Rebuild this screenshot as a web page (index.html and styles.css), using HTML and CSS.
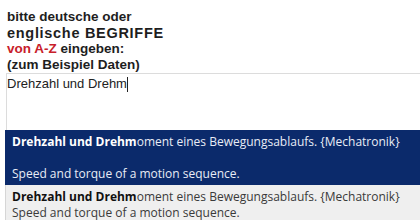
FILE: index.html
```html
<!DOCTYPE html>
<html lang="de">
<head>
<meta charset="utf-8">
<link rel="stylesheet" href="styles.css">
</head>
<body>
<div class="prompt">
  <div>bitte deutsche oder</div>
  <div class="wide">englische BEGRIFFE</div>
  <div><span class="red">von A-Z</span> eingeben:</div>
  <div>(zum Beispiel Daten)</div>
</div>
<div class="field"><span class="val">Drehzahl und Drehm</span><span class="caret"></span></div>
<ul class="suggest">
  <li class="item active">
    <div><b>Drehzahl und Drehm</b>oment eines Bewegungsablaufs. {Mechatronik}</div>
    <div class="blank">&nbsp;</div>
    <div>Speed and torque of a motion sequence.</div>
  </li>
  <li class="item">
    <div><b>Drehzahl und Drehm</b>oment eines Bewegungsablaufs. {Mechatronik}</div>
    <div>Speed and torque of a motion sequence.</div>
  </li>
</ul>
</body>
</html>
```
FILE: styles.css
```css
html, body { margin: 0; padding: 0; background: #fff; }
body { padding: 9px 0 0 7px; overflow: hidden; }
.prompt {
  font-family: "Liberation Sans", Arial, sans-serif;
  font-weight: bold;
  font-size: 13.5px;
  line-height: 16px;
  color: #1e1e1e;
}
.wide { font-size: 14.5px; letter-spacing: 0.7px; }
.red { color: #c8202a; }
.field {
  margin-left: -1px;
  border-top: 1px solid #dcdcdc;
  border-left: 1px solid #dcdcdc;
  height: 54px;
  padding: 2px 0 0 0;
  font-family: "Liberation Sans", Arial, sans-serif;
  font-size: 13px;
  line-height: 16px;
  color: #222;
  display: flex;
  align-items: flex-start;
}
.caret { display: inline-block; width: 1px; height: 15px; background: #222; margin-top: 1px; }
.suggest {
  list-style: none;
  margin: 0 0 0 -2px;
  padding: 0;
  font-family: "Open Sans", "Noto Sans", sans-serif;
  font-size: 12px;
  line-height: 16px;
}
.item {
  padding: 4px 6px 3px 6px;
  background: #efefef;
  color: #3a3a3a;
  border-left: 1px solid #d6d6d6;
}
.item b { color: #111; font-weight: 700; }
.item.active {
  background: #0b2a6b;
  color: #e8ecf6;
  border-left-color: #0b2a6b;
  padding-bottom: 3px;
}
.item.active b { color: #fff; }
```
